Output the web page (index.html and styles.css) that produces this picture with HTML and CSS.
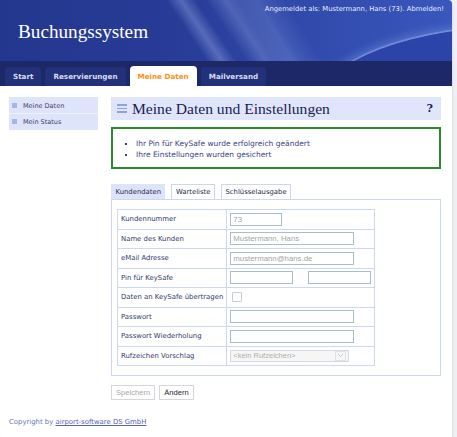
FILE: index.html
```html
<!DOCTYPE html>
<html lang="de">
<head>
<meta charset="utf-8">
<title>Buchungssystem</title>
<link rel="stylesheet" href="styles.css">
</head>
<body>
<div class="deco"></div>
<div class="page">
  <header class="header">
    <div class="arc"></div>
    <div class="login">Angemeldet als: Mustermann, Hans (73). Abmelden!</div>
    <h1 class="brand">Buchungssystem</h1>
  </header>
  <nav class="nav">
    <a class="tab">Start</a>
    <a class="tab">Reservierungen</a>
    <a class="tab active">Meine Daten</a>
    <a class="tab">Mailversand</a>
  </nav>
  <div class="content">
    <aside class="side">
      <div class="side-item"><span class="sq"></span>Meine Daten</div>
      <div class="side-item"><span class="sq"></span>Mein Status</div>
    </aside>
    <main class="main">
      <div class="heading">
        <span class="burger"><i></i><i></i><i></i></span>
        <span class="htitle">Meine Daten und Einstellungen</span>
        <span class="help">?</span>
      </div>
      <div class="msg">
        <ul>
          <li>Ihr Pin für KeySafe wurde erfolgreich geändert</li>
          <li>Ihre Einstellungen wurden gesichert</li>
        </ul>
      </div>
      <div class="tabs">
        <span class="ptab active">Kundendaten</span>
        <span class="ptab">Warteliste</span>
        <span class="ptab">Schlüsselausgabe</span>
      </div>
      <div class="panel">
        <table class="form">
          <tr><td class="lbl">Kundennummer</td><td><span class="inp w52">73</span></td></tr>
          <tr><td class="lbl">Name des Kunden</td><td><span class="inp w124">Mustermann, Hans</span></td></tr>
          <tr><td class="lbl">eMail Adresse</td><td><span class="inp w124">mustermann@hans.de</span></td></tr>
          <tr><td class="lbl">Pin für KeySafe</td><td><div class="pins"><span class="inp w63"></span><span class="inp w63"></span></div></td></tr>
          <tr><td class="lbl">Daten an KeySafe übertragen</td><td><span class="chk"></span></td></tr>
          <tr><td class="lbl">Passwort</td><td><span class="inp w124"></span></td></tr>
          <tr><td class="lbl">Passwort Wiederholung</td><td><span class="inp w124"></span></td></tr>
          <tr><td class="lbl">Rufzeichen Vorschlag</td><td><span class="sel">&lt;kein Rufzeichen&gt;<span class="arrow">
            <svg width="7" height="5" viewBox="0 0 7 5"><path d="M1 1 L3.5 3.5 L6 1" fill="none" stroke="#c8ccd4" stroke-width="1"/></svg></span></span></td></tr>
        </table>
      </div>
      <div class="buttons">
        <span class="btn disabled">Speichern</span>
        <span class="btn">Ändern</span>
      </div>
    </main>
  </div>
  <footer class="footer">Copyright by <a class="flink">airport-software DS GmbH</a></footer>
</div>
</body>
</html>
```

FILE: styles.css
```css
html, body {
  margin: 0;
  padding: 0;
}
body {
  background: #eef0f4;
  font-family: "DejaVu Sans", Verdana, sans-serif;
  width: 457px;
  height: 437px;
  overflow: hidden;
  position: relative;
}
.deco {
  position: absolute;
  left: 27px;
  top: 428px;
  width: 19px;
  height: 14px;
  border-radius: 7px;
  background: #f5a63a;
}
.page {
  position: relative;
  width: 452px;
  background: #fff;
  border-right: 1px solid #dfe3ec;
  border-radius: 0 6px 8px 8px;
  box-shadow: 0 1px 2px rgba(0,0,0,0.08);
}
.header {
  position: relative;
  height: 61px;
  overflow: hidden;
  border-radius: 0 4px 0 0;
  background:
    linear-gradient(56deg, transparent 42%, rgba(170,190,240,0.35) 45%, transparent 48%, transparent 50%, rgba(170,190,240,0.28) 54%, rgba(170,190,240,0.12) 58%, transparent 61%),
    linear-gradient(60deg, transparent 56%, rgba(150,175,235,0.22) 60%, transparent 66%),
    linear-gradient(90deg, #24378e 0%, #283c98 40%, #3049aa 65%, #3a57bd 100%);
}
.arc {
  position: absolute;
  left: 318px;
  top: 26px;
  width: 420px;
  height: 160px;
  border-radius: 50%;
  background: linear-gradient(180deg, #2c45aa, #2a40a2);
  box-shadow: 0 0 0 2px rgba(150,175,235,0.45), -3px -3px 10px rgba(130,160,230,0.45);
}
.login {
  position: absolute;
  right: 8px;
  top: 5px;
  font-size: 6.8px;
  color: #e6ebfa;
  white-space: nowrap;
}
.brand {
  position: absolute;
  left: 18px;
  top: 21px;
  margin: 0;
  font-family: "Liberation Serif", Georgia, serif;
  font-weight: normal;
  font-size: 19.2px;
  color: #fff;
}
.nav {
  height: 25px;
  background: #1c2868;
  display: flex;
  align-items: flex-end;
  gap: 4px;
  padding-left: 5px;
}
.tab {
  height: 19px;
  padding: 0 8px;
  display: flex;
  align-items: center;
  font-size: 7.2px;
  font-weight: bold;
  color: #d6dbee;
  background: #23307a;
  border-radius: 4px 4px 0 0;
}
.tab.active {
  background: #fff;
  color: #f7941d;
  height: 20px;
}
.content {
  display: flex;
  padding: 11px 11px 0 9px;
  gap: 13px;
}
.side {
  width: 89px;
  background: #dee4fa;
  padding: 1px 0;
  align-self: flex-start;
}
.side-item {
  height: 15px;
  display: flex;
  align-items: center;
  font-size: 6.5px;
  color: #3b4171;
  padding-left: 3px;
}
.side-item + .side-item {
  border-top: 1px solid #eef1fc;
}
.sq {
  width: 5px;
  height: 5px;
  background: #a6b6ec;
  margin-right: 6px;
}
.main {
  width: 330px;
}
.heading {
  height: 23px;
  background: #dfe6fb;
  display: flex;
  align-items: center;
  padding: 0 8px 0 6px;
}
.burger {
  display: flex;
  flex-direction: column;
  gap: 2px;
  margin-right: 5px;
}
.burger i {
  display: block;
  width: 10px;
  height: 1.5px;
  background: #8ea2e0;
}
.htitle {
  flex: 1;
  font-family: "Liberation Serif", Georgia, serif;
  font-size: 15.6px;
  color: #1a1d4f;
}
.help {
  font-family: "DejaVu Serif", Georgia, serif;
  font-weight: bold;
  font-size: 11px;
  color: #1e2356;
}
.msg {
  margin-top: 7px;
  box-sizing: content-box;
  border: 2px solid #2b8b27;
  display: flex;
  align-items: center;
  padding-top: 2px;
  height: 36px;
}
.msg ul {
  margin: 0;
  padding-left: 23px;
  font-size: 7.5px;
  color: #3a3f80;
  line-height: 11px;
}
.msg li {
  list-style: square;
}
.tabs {
  margin-top: 15px;
  display: flex;
  gap: 6px;
  height: 15px;
}
.ptab {
  font-size: 6.85px;
  color: #2a2a50;
  border: 1px solid #ccd6f0;
  border-bottom: none;
  padding: 0 3.5px;
  display: flex;
  align-items: center;
}
.ptab.active {
  background: #dce4f9;
  border-color: #dce4f9;
}
.panel {
  border: 1px solid #cdd7f1;
  padding: 9px 6px 9px 5px;
  width: 317px;
}
.form {
  border-collapse: collapse;
  width: 258px;
}
.form td {
  border: 1px solid #cdd7f1;
  height: 18.5px;
  padding: 0 3px;
  font-size: 6.9px;
  color: #323a6a;
}
.form td.lbl {
  width: 103px;
  white-space: nowrap;
}
.inp {
  display: flex;
  align-items: center;
  border: 1px solid #a9bfc8;
  font-family: "Liberation Sans", Arial, sans-serif;
  font-size: 7.8px;
  color: #a4a4a4;
  padding-left: 2px;
  box-sizing: border-box;
  height: 13px;
}
.w52 { width: 52px; }
.w124 { width: 124px; }
.w63 { width: 63px; }
.pins {
  display: flex;
  gap: 15px;
}
.chk {
  display: block;
  width: 8px;
  height: 8px;
  border: 1px solid #c4ccd8;
  margin-left: 2px;
  border-radius: 1px;
}
.sel {
  display: flex;
  align-items: center;
  justify-content: space-between;
  width: 119px;
  height: 12px;
  box-sizing: border-box;
  border: 1px solid #d6d9de;
  background: #f6f6f4;
  font-family: "Liberation Sans", Arial, sans-serif;
  font-size: 7.5px;
  color: #b0b0b0;
  padding: 0 2px;
}
.arrow {
  display: flex;
  align-items: center;
  justify-content: center;
  width: 9px;
  height: 8px;
  border: 1px solid #e0e2e6;
}
.buttons {
  margin-top: 9px;
  display: flex;
  gap: 4px;
}
.btn {
  height: 13px;
  display: flex;
  align-items: center;
  padding: 0 4px;
  border: 1px solid #d4d6da;
  background: #fff;
  font-family: "Liberation Sans", Arial, sans-serif;
  font-size: 7.6px;
  color: #1f2430;
}
.btn.disabled {
  color: #a8a8a8;
}
.footer {
  padding: 18px 9px 10px;
  font-size: 6.9px;
  color: #6676b8;
  height: 15px;
}
.flink {
  text-decoration: underline;
  color: #5364b0;
}
```
